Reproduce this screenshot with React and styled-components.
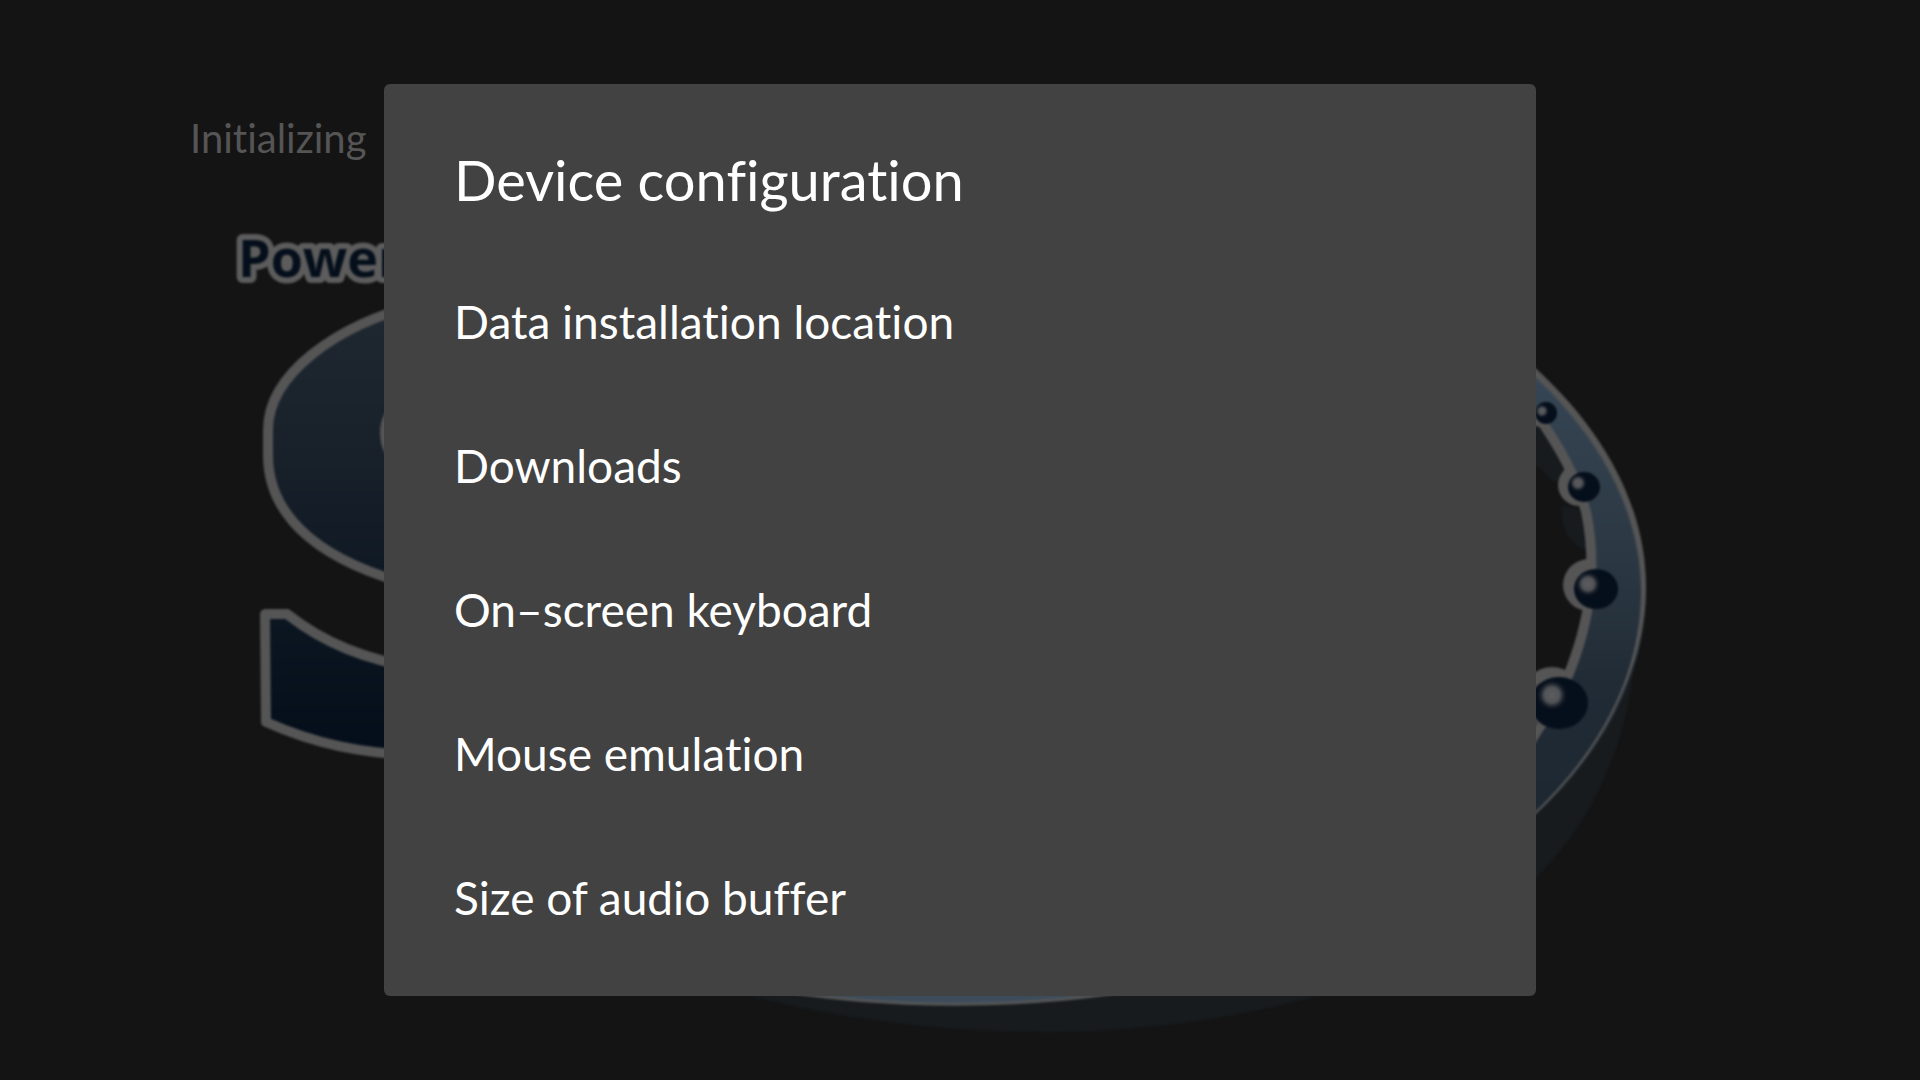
import React from 'react'
import styled, { createGlobalStyle } from 'styled-components'

const GlobalStyle = createGlobalStyle`
  body {
    margin: 0;
    background: #141414;
    font-family: Lato, 'Open Sans', sans-serif;
    font-variant-ligatures: none;
  }
`

const Screen = styled.main`
  position: relative;
  min-height: 100vh;
  box-sizing: border-box;
  padding: 114px 190px;
  overflow: hidden;
`

const Status = styled.p`
  margin: 0;
  font-size: 40px;
  line-height: 48px;
  color: #555555;
`

const Artwork = styled.svg`
  position: absolute;
  inset: 0;
  width: 100%;
  height: 100%;
  filter: blur(1px);
`

const LogoText = styled.text`
  font-family: 'Open Sans', sans-serif;
  font-size: 52px;
  font-weight: 700;
  fill: #050f1b;
  stroke: #5c5c5c;
  stroke-width: 12px;
  stroke-linejoin: round;
  paint-order: stroke;
`

const Overlay = styled.div`
  position: fixed;
  inset: 0;
  display: flex;
  align-items: center;
  justify-content: center;
`

const Dialog = styled.section`
  width: 60%;
  box-sizing: border-box;
  padding: 61px 0 27px;
  border-radius: 6px;
  background: #424242;
  color: #ffffff;
`

const Title = styled.h1`
  margin: 0;
  padding: 0 70px 34px;
  font-size: 56px;
  font-weight: 400;
  line-height: 70px;
`

const Menu = styled.ul`
  margin: 0;
  padding: 0;
  list-style: none;
`

const MenuButton = styled.button`
  display: block;
  width: 100%;
  height: 144px;
  padding: 0 70px;
  border: 0;
  background: none;
  color: inherit;
  font: inherit;
  font-size: 46px;
  text-align: left;
  cursor: pointer;
`

const items = [
  'Data installation location',
  'Downloads',
  'On–screen keyboard',
  'Mouse emulation',
  'Size of audio buffer',
]

const balls = [
  { cx: 1546, cy: 413, rx: 11, ry: 11, halo: [1541, 413, 14], shine: [1542, 411, 7] },
  { cx: 1584, cy: 487, rx: 16, ry: 15, halo: [1579, 485, 21], shine: [1578, 483, 9] },
  { cx: 1596, cy: 589, rx: 22, ry: 20, halo: [1589, 585, 26], shine: [1588, 584, 13] },
  { cx: 1559, cy: 703, rx: 29, ry: 26, halo: [1552, 697, 30], shine: [1552, 695, 16] },
]

const innerEdge =
  'C 1560 448 1577 478 1586 512 C 1596 560 1592 610 1574 660 C 1566 684 1554 706 1530 742'

const Logo = () => (
  <Artwork viewBox="0 0 1920 1080" aria-hidden="true">
    <defs>
      <linearGradient id="letter" gradientUnits="userSpaceOnUse" x1="0" y1="310" x2="0" y2="750">
        <stop offset="0" stopColor="#1f2830" />
        <stop offset="0.35" stopColor="#18202a" />
        <stop offset="0.6" stopColor="#0f1924" />
        <stop offset="1" stopColor="#040e1a" />
      </linearGradient>
      <linearGradient id="ring" gradientUnits="userSpaceOnUse" x1="0" y1="370" x2="0" y2="1003">
        <stop offset="0" stopColor="#374655" />
        <stop offset="0.28" stopColor="#2c3944" />
        <stop offset="0.5" stopColor="#212b35" />
        <stop offset="0.7" stopColor="#1e2832" />
        <stop offset="1" stopColor="#3d4d5c" />
      </linearGradient>
      <radialGradient id="shine">
        <stop offset="0" stopColor="#5c5d5f" />
        <stop offset="0.5" stopColor="#515356" />
        <stop offset="1" stopColor="#050e1b" stopOpacity="0" />
      </radialGradient>
    </defs>

    <LogoText x="238" y="277">
      Powered by
    </LogoText>

    {/* letter */}
    <g fill="url(#letter)" stroke="#555555" strokeWidth="10" strokeLinejoin="round">
      <path d="M 420 304 C 335 325 268 375 268 430 L 268 455 C 268 520 325 564 420 587 Z" />
      <path d="M 265 614 L 287 614 C 325 644 365 659 420 669 L 420 756 C 360 753 315 744 266 722 Z" />
    </g>
    <ellipse cx="396" cy="433" rx="16" ry="28" fill="#555555" />

    {/* drop shadow */}
    <g fill="#171b1e">
      <path d="M 740 993 C 840 1020 945 1032 1047 1032 C 1145 1032 1240 1017 1317 996 C 1420 965 1480 930 1536 878 C 1597 817 1634 730 1635 640 L 1500 800 L 1100 960 Z" />
      <path d="M 1530 420 L 1546 424 L 1574 478 L 1552 482 C 1546 472 1540 468 1530 464 Z" />
      <path d="M 1562 506 L 1580 509 L 1587 550 C 1570 545 1560 530 1562 506 Z" />
    </g>

    {/* ring */}
    {balls.map(({ cx, halo: [x, y, r] }) => (
      <circle key={cx} cx={x} cy={y} r={r} fill="#555555" />
    ))}
    <path
      d={`M 950 1005 A 696 413 0 0 0 1646 592 C 1646 510 1605 430 1530 366 L 1530 402 L 1541 418 ${innerEdge} L 1500 780 L 1100 960 L 700 960 L 700 972 A 696 413 0 0 0 950 1005 Z`}
      fill="url(#ring)"
    />
    <path d={`M 1538 416 ${innerEdge}`} fill="none" stroke="#555555" strokeWidth="10" />
    <path
      d="M 1524 358 C 1605 427 1648 510 1646 592 C 1644 674 1600 752 1530 817 C 1603 748 1640 674 1641 592 C 1641 512 1600 434 1524 367 Z"
      fill="#555555"
    />
    <path
      d="M 1643 592 C 1642 674 1602 752 1530 818"
      fill="none"
      stroke="#555555"
      strokeWidth="2"
    />
    <path
      d="M 720 980 A 696 413 0 0 0 1190 980"
      fill="none"
      stroke="#555555"
      strokeWidth="3"
    />

    {balls.map(({ cx, cy, rx, ry, shine: [x, y, r] }) => (
      <g key={cx}>
        <ellipse cx={cx} cy={cy} rx={rx} ry={ry} fill="#050e1b" />
        <circle cx={x} cy={y} r={r} fill="url(#shine)" />
      </g>
    ))}
  </Artwork>
)

const App = () => (
  <>
    <GlobalStyle />
    <Screen>
      <Logo />
      <Status>Initializing</Status>
    </Screen>
    <Overlay>
      <Dialog role="dialog" aria-labelledby="dialog-title">
        <Title id="dialog-title">Device configuration</Title>
        <Menu>
          {items.map(item => (
            <li key={item}>
              <MenuButton type="button">{item}</MenuButton>
            </li>
          ))}
        </Menu>
      </Dialog>
    </Overlay>
  </>
)

export default App
